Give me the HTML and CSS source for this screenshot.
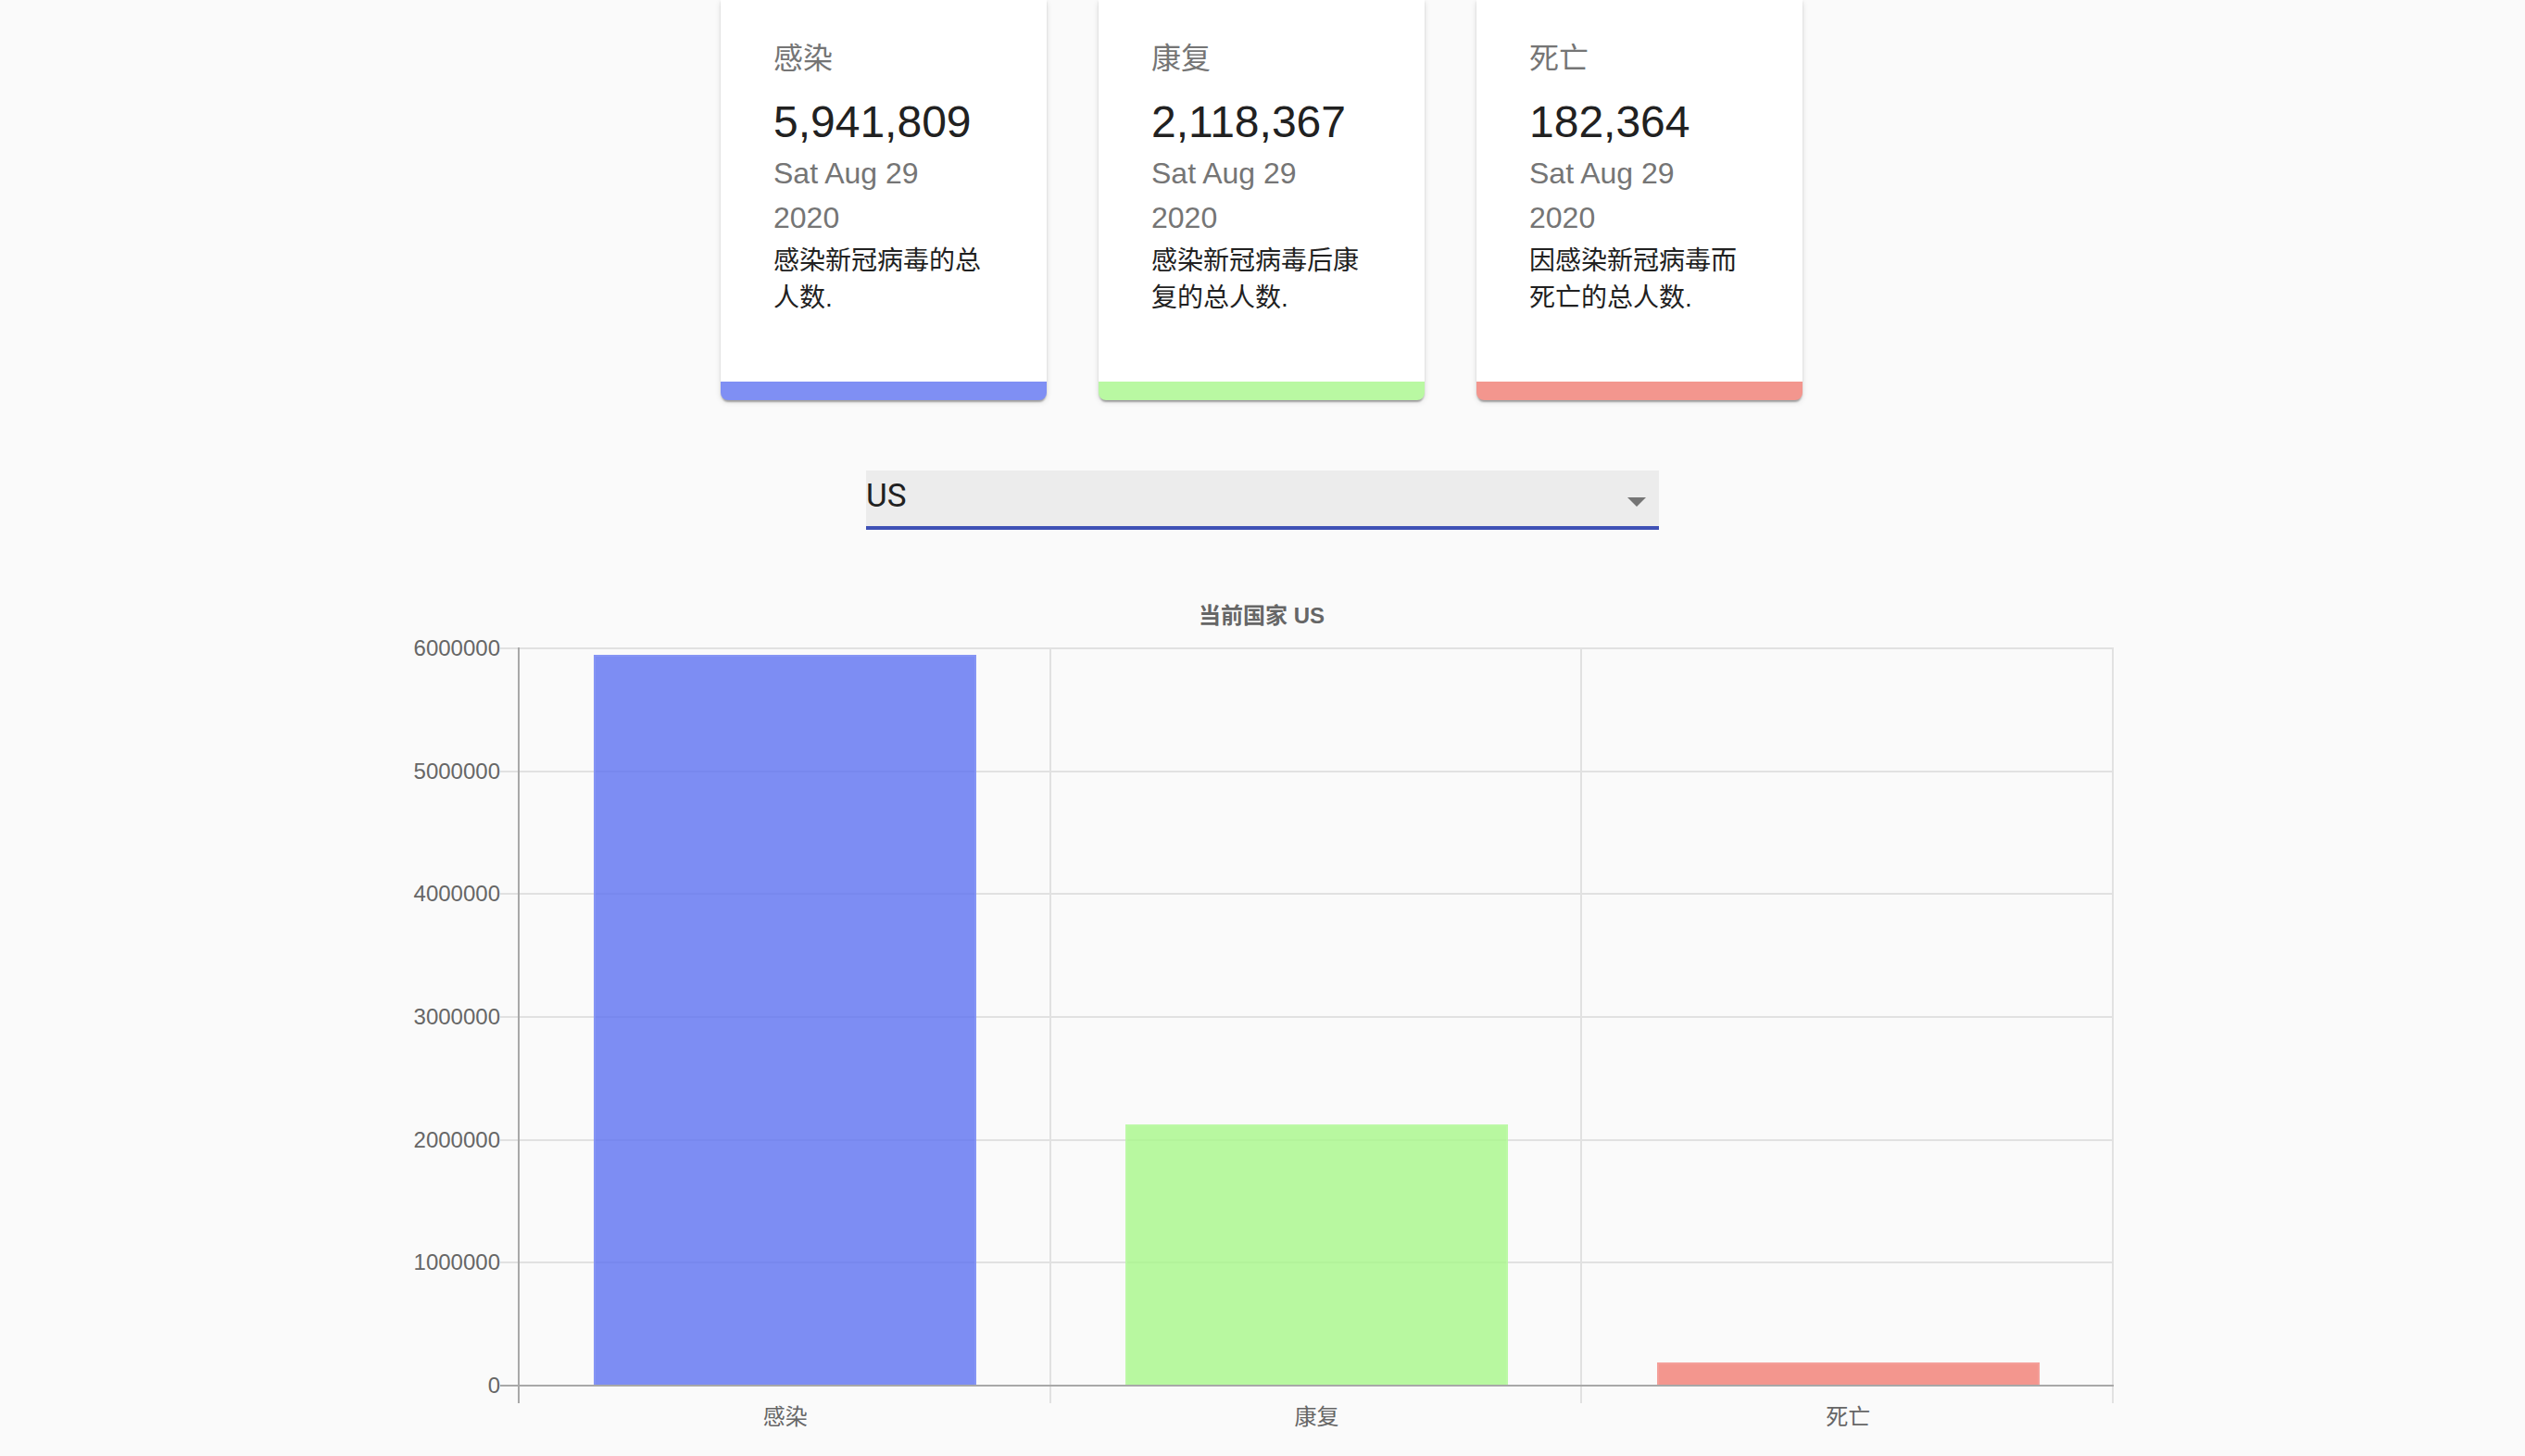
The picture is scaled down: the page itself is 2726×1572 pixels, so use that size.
FILE: index.html
```html
<!DOCTYPE html>
<html lang="zh">
<head>
<meta charset="utf-8">
<title>COVID-19</title>
<link rel="stylesheet" href="styles.css">
</head>
<body>
<div class="page">
  <section class="cards">
    <div class="card card-infected">
      <div class="card-label">感染</div>
      <div class="card-number">5,941,809</div>
      <div class="card-date">Sat Aug 29 2020</div>
      <div class="card-desc">感染新冠病毒的总人数.</div>
    </div>
    <div class="card card-recovered">
      <div class="card-label">康复</div>
      <div class="card-number">2,118,367</div>
      <div class="card-date">Sat Aug 29 2020</div>
      <div class="card-desc">感染新冠病毒后康复的总人数.</div>
    </div>
    <div class="card card-deaths">
      <div class="card-label">死亡</div>
      <div class="card-number">182,364</div>
      <div class="card-date">Sat Aug 29 2020</div>
      <div class="card-desc">因感染新冠病毒而死亡的总人数.</div>
    </div>
  </section>

  <div class="select">
    <span class="select-value">US</span>
    <svg class="select-icon" viewBox="0 0 48 48" width="48" height="48"><path d="M14 20l10 10 10-10z" fill="#757575"/></svg>
  </div>

  <section class="chart">
    <div class="chart-title">当前国家 US</div>
    <div class="chart-body">
      <div class="yaxis">
        <div class="ytick"><span class="ylabel">6000000</span><span class="tick"></span></div>
        <div class="ytick"><span class="ylabel">5000000</span><span class="tick"></span></div>
        <div class="ytick"><span class="ylabel">4000000</span><span class="tick"></span></div>
        <div class="ytick"><span class="ylabel">3000000</span><span class="tick"></span></div>
        <div class="ytick"><span class="ylabel">2000000</span><span class="tick"></span></div>
        <div class="ytick"><span class="ylabel">1000000</span><span class="tick"></span></div>
        <div class="ytick"><span class="ylabel">0</span><span class="tick tick-zero"></span></div>
      </div>
      <div class="plot">
        <div class="category"><div class="bar bar-infected" style="height:788px"></div></div>
        <div class="category"><div class="bar bar-recovered" style="height:281px"></div></div>
        <div class="category"><div class="bar bar-deaths" style="height:24px"></div></div>
      </div>
    </div>
    <div class="xaxis">
      <div class="xaxis-spacer"></div>
      <div class="xticks"></div>
    </div>
    <div class="xaxis">
      <div class="xaxis-spacer"></div>
      <div class="xlabels">
        <div class="xlabel">感染</div>
        <div class="xlabel">康复</div>
        <div class="xlabel">死亡</div>
      </div>
    </div>
  </section>
</div>
</body>
</html>
```

FILE: styles.css
```css
* { box-sizing: border-box; }

html, body {
  margin: 0;
  padding: 0;
  background: #fafafa;
  overflow: hidden;
}

body {
  font-family: "Liberation Sans", "Noto Sans CJK SC", sans-serif;
  color: #212121;
}

.page {
  width: 2726px;
  height: 1572px;
}

/* ---------- cards ---------- */
.cards {
  display: flex;
  justify-content: center;
  gap: 56px;
  padding-right: 2px;
}

.card {
  width: 352px;
  background: #fff;
  padding: 39px 65px 70px 57px;
  border-radius: 0 0 8px 8px;
  border-bottom: 20px solid #7f8ff4;
  box-shadow: 0 4px 2px -2px rgba(0,0,0,0.2), 0 2px 2px 0 rgba(0,0,0,0.14), 0 2px 6px 0 rgba(0,0,0,0.12);
}

.card-infected { border-bottom-color: #7f8ff4; }
.card-recovered { border-bottom-color: #b9f8a2; }
.card-deaths { border-bottom-color: #f3968e; }

.card-label {
  font-size: 32px;
  line-height: 48px;
  color: #757575;
  margin-bottom: 13px;
}

.card-number {
  font-size: 48px;
  line-height: 64px;
  color: #212121;
}

.card-date {
  margin-top: -1px;
  font-size: 32px;
  line-height: 48px;
  color: #757575;
}

.card-desc {
  margin-top: 3px;
  font-size: 28px;
  line-height: 40px;
  color: #212121;
}

/* ---------- select ---------- */
.select {
  width: 856px;
  height: 64px;
  margin: 76px auto 0;
  background: #ececec;
  border-bottom: 4px solid #3f51b5;
  display: flex;
  justify-content: space-between;
  align-items: flex-start;
}

.select-value {
  font-family: Roboto, "Liberation Sans", sans-serif;
  font-size: 35px;
  line-height: 56px;
  color: #212121;
}

.select-icon {
  display: block;
  margin-top: 9px;
}

/* ---------- chart ---------- */
.chart {
  width: 1842px;
  margin: 0 auto;
  padding-right: 2px;
}

.chart-title {
  margin-top: 79px;
  text-align: center;
  font-size: 24px;
  line-height: 28px;
  font-weight: bold;
  color: #666;
}

.chart-body {
  display: flex;
  margin-top: 20px;
}

.yaxis {
  width: 117px;
  height: 798px;
  display: flex;
  flex-direction: column;
  justify-content: space-between;
}

.ytick {
  height: 2px;
  display: flex;
  align-items: center;
  justify-content: flex-end;
}

.ylabel {
  font-size: 24px;
  line-height: 28px;
  color: #666;
  margin-right: 0;
  white-space: nowrap;
}

.tick {
  width: 19px;
  height: 2px;
  background: #e1e1e1;
  flex: none;
}

.tick-zero { background: #a8a8a8; }

.plot {
  width: 1723px;
  height: 798px;
  display: flex;
  align-items: flex-end;
  border-left: 2px solid #a8a8a8;
  border-bottom: 2px solid #a8a8a8;
  background-image:
    repeating-linear-gradient(to bottom, #e1e1e1 0, #e1e1e1 2px, transparent 2px, transparent 132.67px),
    repeating-linear-gradient(to right, transparent 0, transparent 571.67px, #e1e1e1 571.67px, #e1e1e1 573.67px);
}

.category {
  flex: 1;
  display: flex;
  justify-content: center;
  align-items: flex-end;
  height: 100%;
}

.bar {
  width: 72%;
  border: 2px solid transparent;
  border-bottom: 0;
}

.bar-infected {
  background: rgba(94,114,241,0.8);
  border-color: rgba(140,155,245,0.6);
}

.bar-recovered {
  background: rgba(168,248,138,0.8);
  border-color: rgba(190,250,170,0.6);
}

.bar-deaths {
  background: rgba(241,125,115,0.8);
  border-color: rgba(245,165,160,0.6);
}

.xaxis {
  display: flex;
}

.xaxis-spacer {
  width: 117px;
  flex: none;
}

.xticks {
  width: 1723px;
  height: 18px;
  border-left: 2px solid #a8a8a8;
  background-image:
    repeating-linear-gradient(to right, transparent 0, transparent 571.67px, #e1e1e1 571.67px, #e1e1e1 573.67px);
}

.xlabels {
  width: 1723px;
  padding-left: 2px;
  margin-top: 1px;
  display: flex;
}

.xlabel {
  flex: 1;
  text-align: center;
  font-size: 24px;
  line-height: 28px;
  color: #666;
}
```
